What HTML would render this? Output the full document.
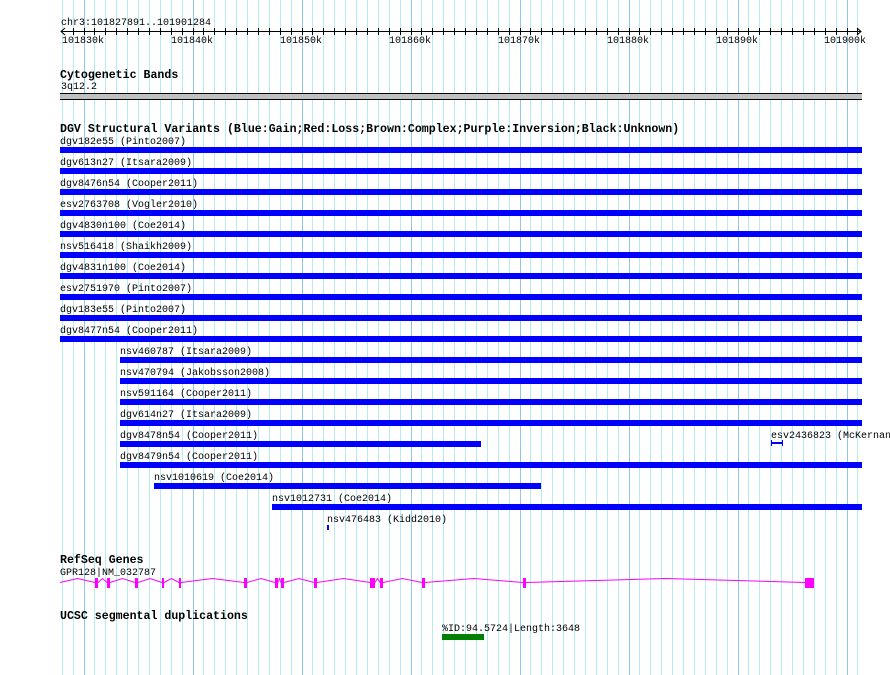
<!DOCTYPE html>
<html><head><meta charset="utf-8"><style>
html,body{margin:0;padding:0;background:#fff;}
svg{display:block;}
text{font-family:"Liberation Mono",monospace;font-size:10px;fill:#000;}
.b{font-weight:bold;font-size:11.6px;}
</style></head><body>
<svg id="s" width="890" height="675" xmlns="http://www.w3.org/2000/svg">
<g id="grid"></g>
<g id="ticks" stroke="#000" stroke-width="1"></g>
<line x1="61" y1="31.5" x2="861" y2="31.5" stroke="#000"/>
<polyline points="65,28 61,31.5 65,35" fill="none" stroke="#000"/>
<polyline points="857,28 861,31.5 857,35" fill="none" stroke="#000"/>
<text x="61" y="25">chr3:101827891..101901284</text>
<text x="62" y="43">101830k</text>
<text x="171" y="43">101840k</text>
<text x="280" y="43">101850k</text>
<text x="389" y="43">101860k</text>
<text x="498" y="43">101870k</text>
<text x="607" y="43">101880k</text>
<text x="716" y="43">101890k</text>
<text x="824" y="43">101900k</text>

<text class="b" x="60" y="78">Cytogenetic Bands</text>
<text x="61" y="89">3q12.2</text>
<rect x="60" y="93" width="802" height="7" fill="#c0c0c0"/>
<line x1="60" y1="93.5" x2="862" y2="93.5" stroke="#000"/>
<line x1="60" y1="99.5" x2="862" y2="99.5" stroke="#000"/>

<text class="b" x="60" y="132">DGV Structural Variants (Blue:Gain;Red:Loss;Brown:Complex;Purple:Inversion;Black:Unknown)</text>
<g fill="#0000ff">
<rect x="60" y="147" width="802" height="6"/>
<rect x="60" y="168" width="802" height="6"/>
<rect x="60" y="189" width="802" height="6"/>
<rect x="60" y="210" width="802" height="6"/>
<rect x="60" y="231" width="802" height="6"/>
<rect x="60" y="252" width="802" height="6"/>
<rect x="60" y="273" width="802" height="6"/>
<rect x="60" y="294" width="802" height="6"/>
<rect x="60" y="315" width="802" height="6"/>
<rect x="60" y="336" width="802" height="6"/>
<rect x="120" y="357" width="742" height="6"/>
<rect x="120" y="378" width="742" height="6"/>
<rect x="120" y="399" width="742" height="6"/>
<rect x="120" y="420" width="742" height="6"/>
<rect x="120" y="441" width="361" height="6"/>
<rect x="120" y="462" width="742" height="6"/>
<rect x="154" y="483" width="387" height="6"/>
<rect x="272" y="504" width="590" height="6"/>
<rect x="327" y="525" width="2" height="5"/>
<rect x="771" y="442" width="12" height="2"/>
<rect x="771" y="440" width="1" height="6"/>
<rect x="782" y="440" width="1" height="6"/>
</g>
<text x="60" y="144">dgv182e55 (Pinto2007)</text>
<text x="60" y="165">dgv613n27 (Itsara2009)</text>
<text x="60" y="186">dgv8476n54 (Cooper2011)</text>
<text x="60" y="207">esv2763708 (Vogler2010)</text>
<text x="60" y="228">dgv4830n100 (Coe2014)</text>
<text x="60" y="249">nsv516418 (Shaikh2009)</text>
<text x="60" y="270">dgv4831n100 (Coe2014)</text>
<text x="60" y="291">esv2751970 (Pinto2007)</text>
<text x="60" y="312">dgv183e55 (Pinto2007)</text>
<text x="60" y="333">dgv8477n54 (Cooper2011)</text>
<text x="120" y="354">nsv460787 (Itsara2009)</text>
<text x="120" y="375">nsv470794 (Jakobsson2008)</text>
<text x="120" y="396">nsv591164 (Cooper2011)</text>
<text x="120" y="417">dgv614n27 (Itsara2009)</text>
<text x="120" y="438">dgv8478n54 (Cooper2011)</text>
<text x="771" y="438">esv2436823 (McKernan</text>
<text x="120" y="459">dgv8479n54 (Cooper2011)</text>
<text x="154" y="480">nsv1010619 (Coe2014)</text>
<text x="272" y="501">nsv1012731 (Coe2014)</text>
<text x="327" y="522">nsv476483 (Kidd2010)</text>

<text class="b" x="60" y="563">RefSeq Genes</text>
<text x="60" y="575">GPR128|NM_032787</text>
<g id="gene" fill="#ff00ff"></g>
<polyline id="intr" fill="none" stroke="#ff00ff" stroke-width="1"/>

<text class="b" x="60" y="619">UCSC segmental duplications</text>
<text x="442" y="631">%ID:94.5724|Length:3648</text>
<rect x="442" y="634" width="42" height="6" fill="#008000"/>
</svg>
<script>
var NS="http://www.w3.org/2000/svg";
var g=document.getElementById("grid"),t=document.getElementById("ticks");
for(var k=-2;k<=71;k++){var x=Math.round(83.5+10.9*k)+0.5;
var l=document.createElementNS(NS,"line");l.setAttribute("x1",x);l.setAttribute("x2",x);l.setAttribute("y1",0);l.setAttribute("y2",675);
l.setAttribute("stroke",k%10==0?"#8ec8ec":"#b4ecf2");g.appendChild(l);
if(k>=-1){var m=document.createElementNS(NS,"line");m.setAttribute("x1",x);m.setAttribute("x2",x);m.setAttribute("y1",28);m.setAttribute("y2",35);t.appendChild(m);}}
var ex=[[60,60],[95,98],[107,110],[135,138],[162,164],[179,181],[244,247],[275,278],[281,284],[314,317],[370,375],[380,383],[422,425],[523,526],[805,814]];
var gg=document.getElementById("gene"),pts=[];
for(var i=0;i<ex.length;i++){if(i>0){var r=document.createElementNS(NS,"rect");r.setAttribute("x",ex[i][0]);r.setAttribute("y",578);r.setAttribute("width",ex[i][1]-ex[i][0]);r.setAttribute("height",i==ex.length-1?10:10);gg.appendChild(r);}
if(i<ex.length-1){var a=ex[i][1],b=ex[i+1][0];pts.push(a+",582.5",((a+b)/2)+",578.5",b+",582.5");}}
document.getElementById("intr").setAttribute("points",pts.join(" "));
</script>
</body></html>
